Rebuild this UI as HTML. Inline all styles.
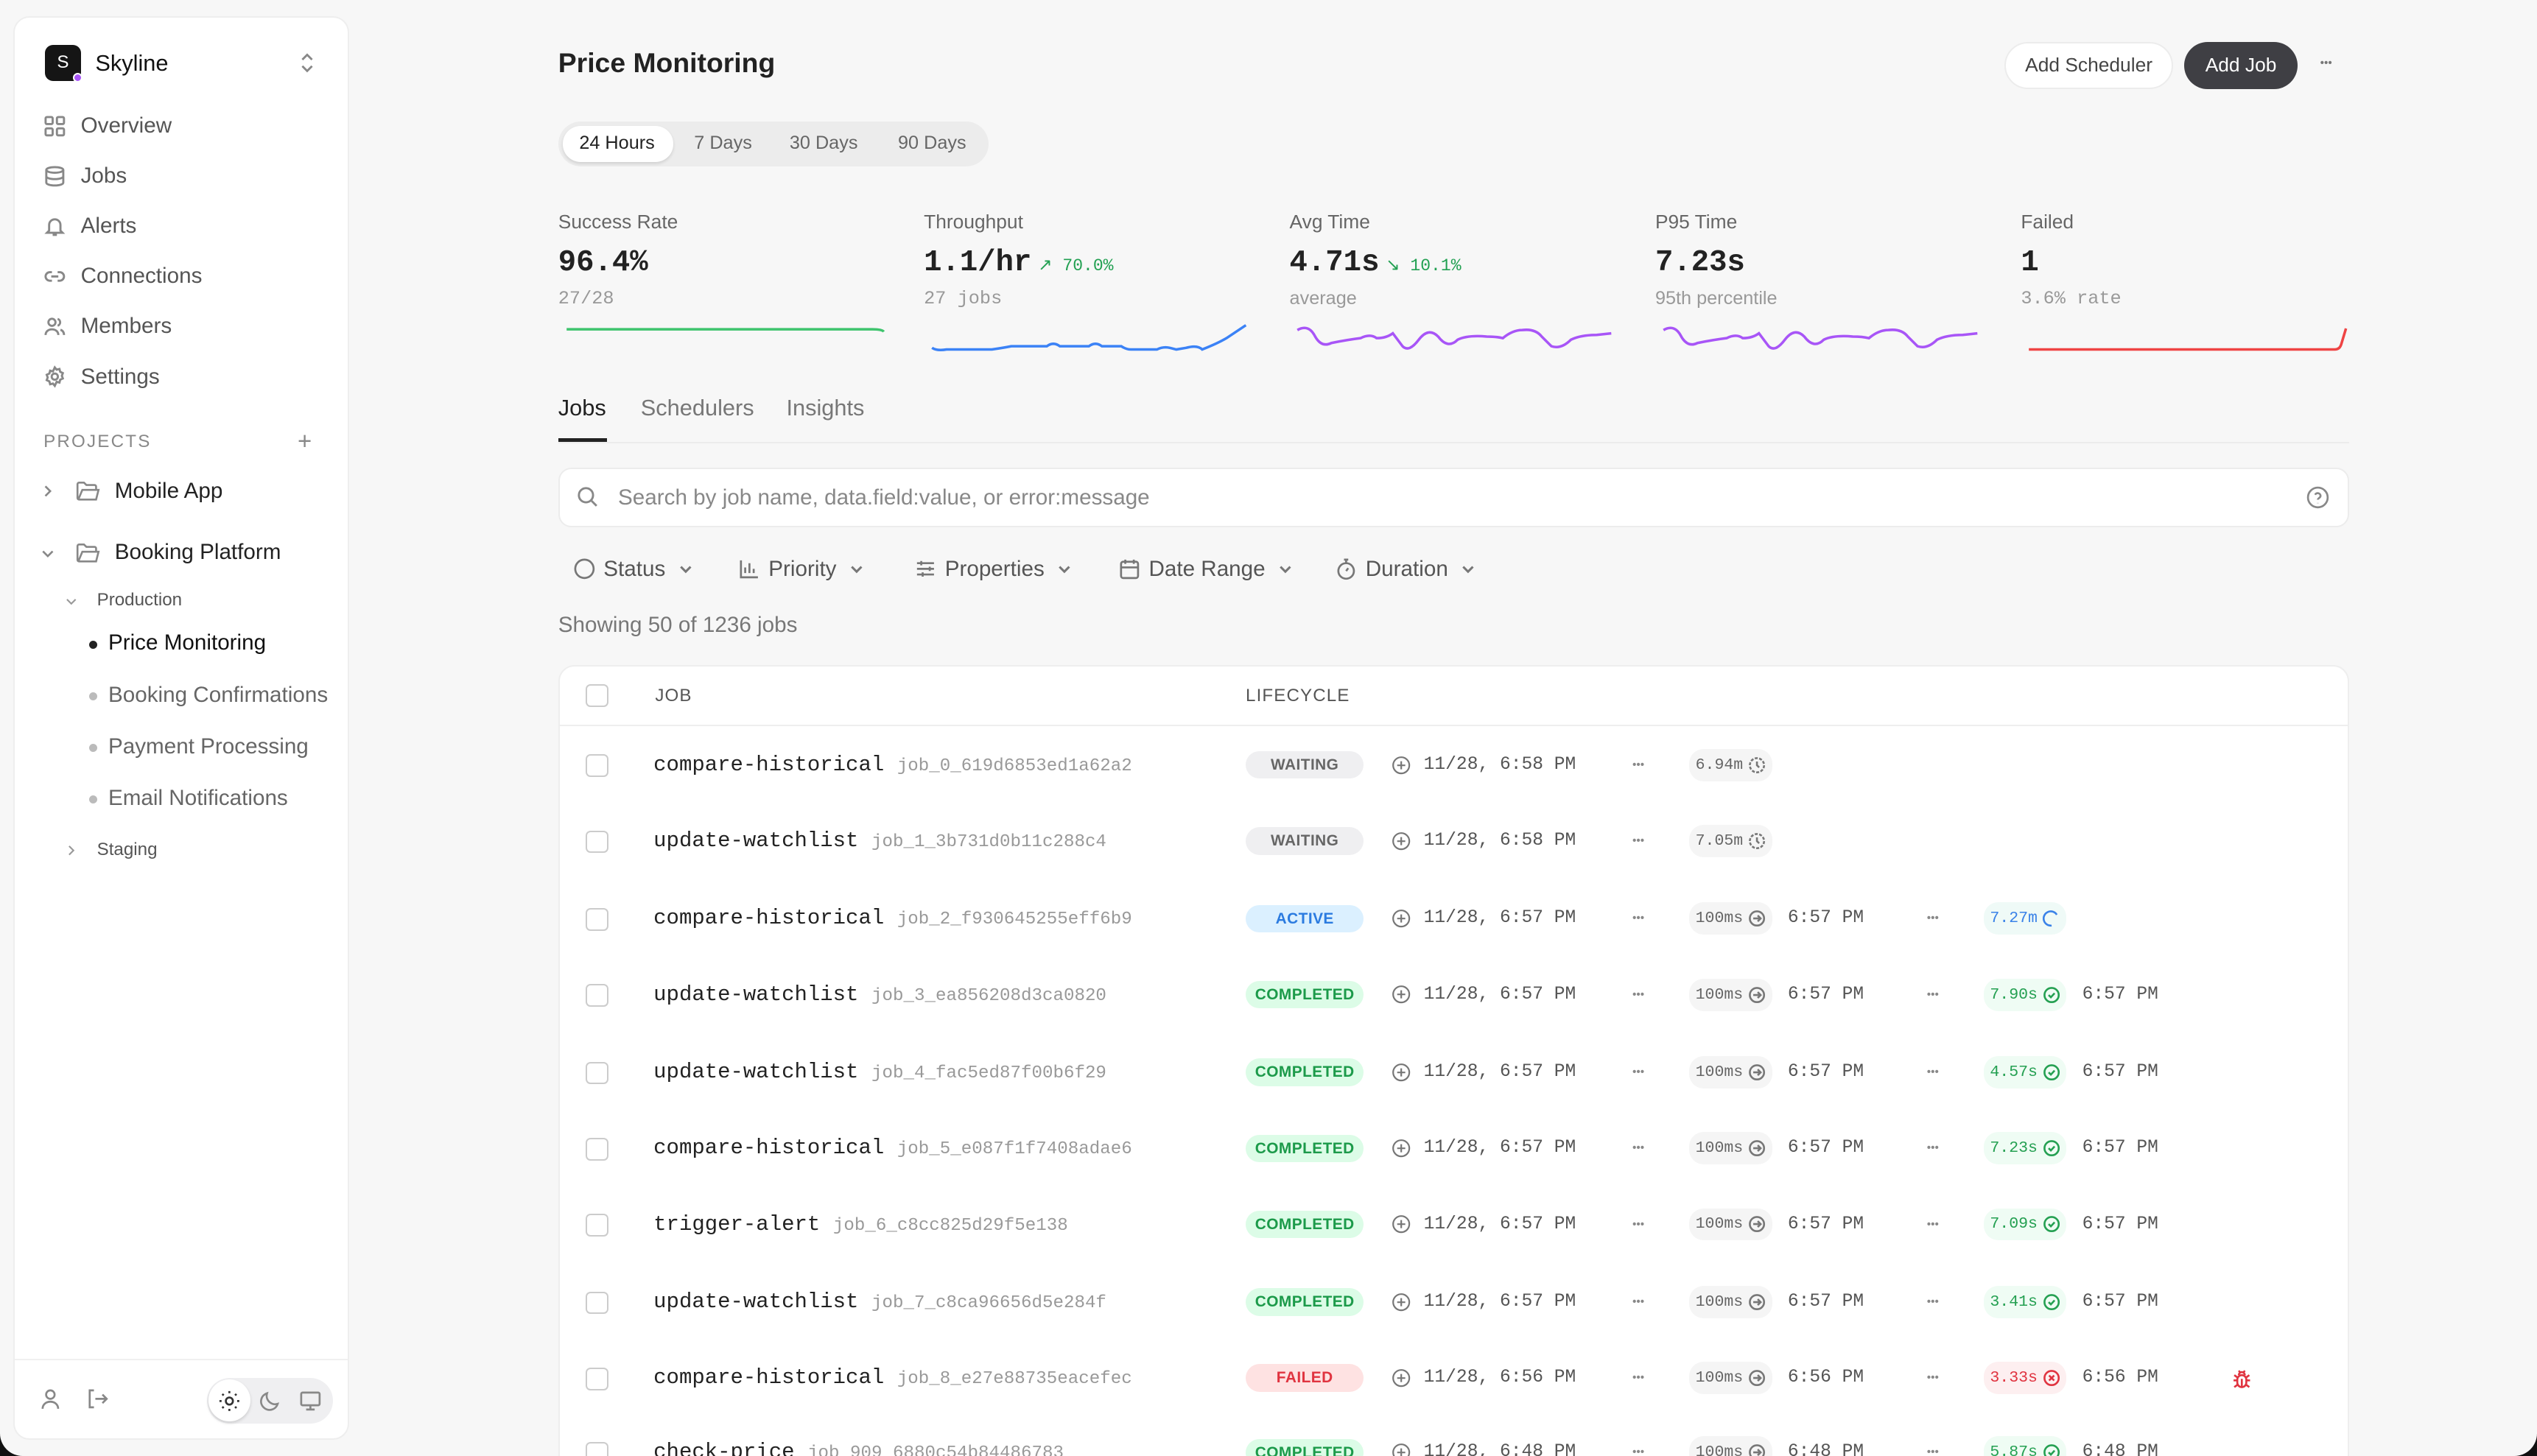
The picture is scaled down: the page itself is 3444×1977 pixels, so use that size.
<!DOCTYPE html>
<html><head><meta charset="utf-8"><style>
html{zoom:2.19643}
*{box-sizing:border-box;margin:0;padding:0}
body{width:1568px;height:900px;overflow:hidden;background:#111;font-family:"Liberation Sans",sans-serif;position:relative}
#w{position:absolute;left:0;top:0;width:1568px;height:900px;background:#f7f7f7;border-radius:0 0 14px 14px;overflow:hidden}
.a{position:absolute;white-space:nowrap}
#sb{position:absolute;left:8px;top:10px;width:208px;height:880px;background:#fff;border:1px solid #eee;border-radius:10px}
.nav{position:absolute;left:18px;font-size:13.5px;color:#555;display:flex;align-items:center;gap:9px;height:20px}
.nav svg{width:14px;height:14px;stroke:#888;fill:none;stroke-width:1.5}
.st{position:absolute;top:0;width:226px}
.st .l{position:absolute;top:130px;font-size:12px;color:#666}
.st .v{position:absolute;top:152px;font:700 18.5px "Liberation Mono",monospace;color:#222}
.st .v small{font-size:10.5px;color:#22a052;font-weight:400;margin-left:4px}
.st .s{position:absolute;top:178px;font:11.5px "Liberation Mono",monospace;color:#999}
.st .s.sans{font-family:"Liberation Sans",sans-serif}
.st svg{position:absolute;top:198px;left:4px}
.flt{position:absolute;top:344px;font-size:13.5px;color:#555;display:flex;align-items:center;gap:5px}
.flt svg{width:14px;height:14px;stroke:#777;fill:none;stroke-width:1.4}
.flt .cv{width:9px;height:9px;margin-left:3px}
#tb{position:absolute;left:345px;top:411px;width:1107px;height:560px;background:#fff;border:1px solid #eee;border-radius:10px;overflow:hidden}
.r{position:absolute;left:0;right:0;height:20px}
.r>*{position:absolute;top:0;white-space:nowrap}
.cb{left:16px;top:3.5px!important;width:14px;height:14px;border:1.3px solid #ccc;border-radius:3px;background:#fff}
.nm{left:58px;font:13.2px "Liberation Mono",monospace;line-height:20px;color:#222}
.nm i{font-style:normal;font-size:11px;color:#999;margin-left:8px}
.bd{left:424px;top:1.5px!important;width:73px;height:17px;line-height:17px;border-radius:9px;font-weight:700;font-size:9.5px;text-align:center;letter-spacing:.2px}
.W{background:#efeff1;color:#666}.A{background:#dbf0ff;color:#2b7be0}.C{background:#dcfce7;color:#1c9a4a}.F{background:#fee2e2;color:#e03440}
.ck{left:514px;top:4px!important;width:12px;height:12px}
.dt{left:534px;font:11.2px "Liberation Mono",monospace;line-height:20px;color:#555}
.d1,.d2{font-size:7px;line-height:20px;color:#888;letter-spacing:0}
.d1{left:663px}.d2{left:845px}
.p{height:20px;border-radius:9px;font:9.8px "Liberation Mono",monospace;padding:0 4px;display:flex;align-items:center;gap:3px}
.p svg{width:11px;height:11px;fill:none;stroke-width:1.3}
.p1{left:698px;background:#f5f5f5;color:#666}.p1 svg{stroke:#777}
.p2{left:880px;background:#effcf4;color:#25a052}.p2 svg{stroke:#25a052}
.p2.b{background:#effaf7;color:#3a82e8}.p2.b svg{stroke:#3a82e8}
.p2.rd{background:#fdeff0;color:#e03440}.p2.rd svg{stroke:#e03440}
.t1{left:759px;font:11.2px "Liberation Mono",monospace;line-height:20px;color:#555}
.t2{left:941px;font:11.2px "Liberation Mono",monospace;line-height:20px;color:#555}
</style></head><body><div id="w">

<div id="sb">
 <div class="a" style="left:19px;top:17px;width:22px;height:22px;background:#151515;border-radius:5px;color:#fff;font-size:11px;text-align:center;line-height:22px">S</div>
 <div class="a" style="left:36px;top:34px;width:6px;height:6px;background:#a855f7;border-radius:50%;border:1px solid #fff"></div>
 <div class="a" style="left:50px;top:20px;font-size:14px;color:#111">Skyline</div>
 <svg class="a" style="left:176px;top:21px" width="10" height="14" viewBox="0 0 10 14" fill="none" stroke="#888" stroke-width="1.3"><path d="M2 5l3-3 3 3M2 9l3 3 3-3"/></svg>

 <div class="nav" style="top:57px"><svg viewBox="0 0 16 16"><rect x="1.5" y="1.5" width="5" height="5" rx="1"/><rect x="9.5" y="1.5" width="5" height="5" rx="1"/><rect x="1.5" y="9.5" width="5" height="5" rx="1"/><rect x="9.5" y="9.5" width="5" height="5" rx="1"/></svg>Overview</div>
 <div class="nav" style="top:88px"><svg viewBox="0 0 16 16"><ellipse cx="8" cy="3.5" rx="6" ry="2"/><path d="M2 3.5v9c0 1.1 2.7 2 6 2s6-.9 6-2v-9M2 8c0 1.1 2.7 2 6 2s6-.9 6-2"/></svg>Jobs</div>
 <div class="nav" style="top:119px"><svg viewBox="0 0 16 16"><path d="M4 11V7a4 4 0 018 0v4l1.5 1.5h-11zM6.5 14h3"/></svg>Alerts</div>
 <div class="nav" style="top:150px"><svg viewBox="0 0 16 16"><path d="M6 5H4.5a3 3 0 000 6H6M10 5h1.5a3 3 0 010 6H10M5.5 8h5"/></svg>Connections</div>
 <div class="nav" style="top:181px"><svg viewBox="0 0 16 16"><circle cx="6" cy="5" r="2.5"/><path d="M1.5 14c0-2.5 2-4 4.5-4s4.5 1.5 4.5 4M10 2.6a2.5 2.5 0 010 4.8M12 10.3c1.5.5 2.5 1.8 2.5 3.7"/></svg>Members</div>
 <div class="nav" style="top:212px"><svg viewBox="0 0 16 16"><circle cx="8" cy="8" r="2.2"/><path d="M8 1.5l1.3 1.6 2-.5.5 2 1.9.9-.7 1.9.7 1.9-1.9.9-.5 2-2-.5L8 14.5l-1.3-1.6-2 .5-.5-2-1.9-.9.7-1.9-.7-1.9 1.9-.9.5-2 2 .5z"/></svg>Settings</div>

 <div class="a" style="left:18px;top:256px;font-size:11px;letter-spacing:1px;color:#888">PROJECTS</div>
 <div class="a" style="left:175px;top:253px;font-size:15px;color:#888">+</div>

 <svg class="a" style="left:16px;top:288px" width="9" height="9" viewBox="0 0 9 9" fill="none" stroke="#888" stroke-width="1.2"><path d="M3 1.5l3 3-3 3"/></svg>
 <svg class="a" style="left:38px;top:286px" width="15" height="13" viewBox="0 0 15 13" fill="none" stroke="#888" stroke-width="1.2"><path d="M1 2.5V11a1 1 0 001 1h10.5l1.5-6H4l-2.5 6M1 2.5a1 1 0 011-1h3l1.5 1.5h5a1 1 0 011 1V6"/></svg>
 <div class="a" style="left:62px;top:285px;font-size:13.5px;color:#222">Mobile App</div>

 <svg class="a" style="left:16px;top:327px" width="9" height="9" viewBox="0 0 9 9" fill="none" stroke="#888" stroke-width="1.2"><path d="M1.5 3l3 3 3-3"/></svg>
 <svg class="a" style="left:38px;top:324px" width="15" height="13" viewBox="0 0 15 13" fill="none" stroke="#888" stroke-width="1.2"><path d="M1 2.5V11a1 1 0 001 1h10.5l1.5-6H4l-2.5 6M1 2.5a1 1 0 011-1h3l1.5 1.5h5a1 1 0 011 1V6"/></svg>
 <div class="a" style="left:62px;top:323px;font-size:13.5px;color:#222">Booking Platform</div>

 <svg class="a" style="left:31px;top:357px" width="8" height="8" viewBox="0 0 9 9" fill="none" stroke="#999" stroke-width="1.1"><path d="M1.5 3l3 3 3-3"/></svg>
 <div class="a" style="left:51px;top:354px;font-size:11px;color:#555">Production</div>
 <div class="a" style="left:46px;top:385px;width:5px;height:5px;border-radius:50%;background:#222"></div>
 <div class="a" style="left:58px;top:379px;font-size:13.5px;color:#111">Price Monitoring</div>
 <div class="a" style="left:46px;top:417px;width:5px;height:5px;border-radius:50%;background:#bbb"></div>
 <div class="a" style="left:58px;top:411px;font-size:13.5px;color:#666">Booking Confirmations</div>
 <div class="a" style="left:46px;top:449px;width:5px;height:5px;border-radius:50%;background:#bbb"></div>
 <div class="a" style="left:58px;top:443px;font-size:13.5px;color:#666">Payment Processing</div>
 <div class="a" style="left:46px;top:481px;width:5px;height:5px;border-radius:50%;background:#bbb"></div>
 <div class="a" style="left:58px;top:475px;font-size:13.5px;color:#666">Email Notifications</div>
 <svg class="a" style="left:31px;top:511px" width="8" height="8" viewBox="0 0 9 9" fill="none" stroke="#999" stroke-width="1.1"><path d="M3 1.5l3 3-3 3"/></svg>
 <div class="a" style="left:51px;top:508px;font-size:11px;color:#555">Staging</div>

 <div class="a" style="left:0;right:0;top:829px;height:1px;background:#f0f0f0"></div>
 <svg class="a" style="left:15px;top:847px" width="14" height="14" viewBox="0 0 16 16" fill="none" stroke="#888" stroke-width="1.4"><circle cx="8" cy="5" r="3"/><path d="M2.5 15c0-3 2.5-5 5.5-5s5.5 2 5.5 5"/></svg>
 <svg class="a" style="left:44px;top:847px" width="14" height="14" viewBox="0 0 16 16" fill="none" stroke="#888" stroke-width="1.4"><path d="M6 2H3v12h3M7 8h8M12 5l3 3-3 3"/></svg>
 <div class="a" style="left:119px;top:841px;width:78px;height:28px;border-radius:14px;background:#efeff1"></div>
 <div class="a" style="left:120px;top:842px;width:26px;height:26px;border-radius:13px;background:#fff;box-shadow:0 1px 2px rgba(0,0,0,.15)"></div>
 <svg class="a" style="left:126px;top:848px" width="14" height="14" viewBox="0 0 16 16" fill="none" stroke="#333" stroke-width="1.4"><circle cx="8" cy="8" r="2.5"/><path d="M8 1v1.5M8 13.5V15M1 8h1.5M13.5 8H15M3 3l1 1M12 12l1 1M3 13l1-1M12 4l1-1"/></svg>
 <svg class="a" style="left:151px;top:848px" width="14" height="14" viewBox="0 0 16 16" fill="none" stroke="#888" stroke-width="1.4"><path d="M13.5 10A6 6 0 016 2.5a6 6 0 107.5 7.5z"/></svg>
 <svg class="a" style="left:176px;top:848px" width="14" height="14" viewBox="0 0 16 16" fill="none" stroke="#888" stroke-width="1.4"><rect x="1.5" y="2" width="13" height="9" rx="1"/><path d="M8 11v3M5 14h6"/></svg>
</div>

<!-- header -->
<div class="a" style="left:345px;top:29px;font-size:17px;font-weight:600;color:#222">Price Monitoring</div>
<div class="a" style="left:1239px;top:26px;width:104px;height:29px;border:1px solid #ececec;background:#fff;border-radius:15px;font-size:12px;color:#444;text-align:center;line-height:27px">Add Scheduler</div>
<div class="a" style="left:1350px;top:26px;width:70px;height:29px;background:#3f3f44;border-radius:15px;font-size:12px;color:#fff;text-align:center;line-height:29px">Add Job</div>
<div class="a" style="left:1434px;top:35px;font-size:7px;color:#777">•••</div>

<div class="a" style="left:345px;top:75px;width:266px;height:28px;background:#ececec;border-radius:14px"></div>
<div class="a" style="left:348px;top:78px;width:68px;height:22px;background:#fff;border-radius:11px;box-shadow:0 1px 2px rgba(0,0,0,.12)"></div>
<div class="a" style="left:358px;top:82px;font-size:11.5px;color:#222">24 Hours</div>
<div class="a" style="left:429px;top:82px;font-size:11.5px;color:#666">7 Days</div>
<div class="a" style="left:488px;top:82px;font-size:11.5px;color:#666">30 Days</div>
<div class="a" style="left:555px;top:82px;font-size:11.5px;color:#666">90 Days</div>

<!-- stats -->
<div class="st" style="left:345px"><div class="l">Success Rate</div><div class="v">96.4%</div><div class="s">27/28</div>
<svg width="200" height="22"><path d="M1 5.5 H190 Q196 5.5 197 7" stroke="#3ec46d" stroke-width="1.6" fill="none"/></svg></div>
<div class="st" style="left:571px"><div class="l">Throughput</div><div class="v">1.1/hr<small>↗ 70.0%</small></div><div class="s">27 jobs</div>
<svg width="200" height="22"><path d="M1 17 Q4 19 10 18 H38 Q45 17 50 16 H72 Q76 13 80 16 H98 Q102 13 106 16 H118 Q121 18 124 18 H140 Q144 16 148 17 L152 18 L158 17 Q165 15 168 18 Q178 14 183 11 L195 3" stroke="#3b82f6" stroke-width="1.6" fill="none"/></svg></div>
<div class="st" style="left:797px"><div class="l">Avg Time</div><div class="v">4.71s<small>↘ 10.1%</small></div><div class="s sans">average</div>
<svg width="200" height="22"><path d="M1 6 Q8 2 12 10 Q16 17 22 14 Q32 12 40 11 Q46 8 50 11 Q56 11 60 8 L66 16 Q70 20 76 12 Q82 4 88 10 Q94 18 100 12 Q106 9 118 10 Q124 10 128 11 Q134 6 140 6 Q148 5 152 10 L158 16 Q164 18 170 12 Q176 9 186 9 L195 8" stroke="#a855f7" stroke-width="1.6" fill="none"/></svg></div>
<div class="st" style="left:1023px"><div class="l">P95 Time</div><div class="v">7.23s</div><div class="s sans">95th percentile</div>
<svg width="200" height="22"><path d="M1 6 Q8 2 12 10 Q16 17 22 14 Q32 12 40 11 Q46 8 50 11 Q56 11 60 8 L66 16 Q70 20 76 12 Q82 4 88 10 Q94 18 100 12 Q106 9 118 10 Q124 10 128 11 Q134 6 140 6 Q148 5 152 10 L158 16 Q164 18 170 12 Q176 9 186 9 L195 8" stroke="#a855f7" stroke-width="1.6" fill="none"/></svg></div>
<div class="st" style="left:1249px"><div class="l">Failed</div><div class="v">1</div><div class="s">3.6% rate</div>
<svg width="200" height="22"><path d="M1 18 H190 Q193 18 194 15 L197 5" stroke="#ef4444" stroke-width="1.6" fill="none"/></svg></div>

<!-- tabs -->
<div class="a" style="left:345px;top:244px;font-size:14px;color:#222">Jobs</div>
<div class="a" style="left:396px;top:244px;font-size:14px;color:#777">Schedulers</div>
<div class="a" style="left:486px;top:244px;font-size:14px;color:#777">Insights</div>
<div class="a" style="left:345px;top:273px;width:1107px;height:1px;background:#ececec"></div>
<div class="a" style="left:345px;top:271px;width:30px;height:2px;background:#222"></div>

<!-- search -->
<div class="a" style="left:345px;top:289px;width:1107px;height:37px;background:#fff;border:1px solid #ececec;border-radius:8px"></div>
<svg class="a" style="left:356px;top:300px" width="14" height="14" viewBox="0 0 16 16" fill="none" stroke="#888" stroke-width="1.5"><circle cx="7" cy="7" r="5"/><path d="M11 11l3.5 3.5"/></svg>
<div class="a" style="left:382px;top:300px;font-size:13.5px;color:#888">Search by job name, data.field:value, or error:message</div>
<svg class="a" style="left:1425px;top:300px" width="15" height="15" viewBox="0 0 16 16" fill="none" stroke="#888" stroke-width="1.3"><circle cx="8" cy="8" r="6.5"/><path d="M6.2 6.2a1.9 1.9 0 013.6.7c0 1.3-1.8 1.6-1.8 2.6M8 11.6v.2"/></svg>

<!-- filters -->
<div class="flt" style="left:354px"><svg viewBox="0 0 16 16"><circle cx="8" cy="8" r="6.5"/></svg>Status<svg class="cv" viewBox="0 0 9 9"><path d="M1.5 3l3 3 3-3"/></svg></div>
<div class="flt" style="left:456px"><svg viewBox="0 0 16 16"><path d="M2 2v12h12M5 11V7M8 11V4M11 11V8"/></svg>Priority<svg class="cv" viewBox="0 0 9 9"><path d="M1.5 3l3 3 3-3"/></svg></div>
<div class="flt" style="left:565px"><svg viewBox="0 0 16 16"><path d="M2 4h12M2 8h12M2 12h12M5 2.5v3M11 6.5v3M6 10.5v3"/></svg>Properties<svg class="cv" viewBox="0 0 9 9"><path d="M1.5 3l3 3 3-3"/></svg></div>
<div class="flt" style="left:691px"><svg viewBox="0 0 16 16"><rect x="2" y="3" width="12" height="11.5" rx="1.5"/><path d="M2 7h12M5 1.5v3M11 1.5v3"/></svg>Date Range<svg class="cv" viewBox="0 0 9 9"><path d="M1.5 3l3 3 3-3"/></svg></div>
<div class="flt" style="left:825px"><svg viewBox="0 0 16 16"><circle cx="8" cy="9.5" r="5.5"/><path d="M6.5 1.5h3M8 1.5v2.5M8 9.5l1.5-2"/></svg>Duration<svg class="cv" viewBox="0 0 9 9"><path d="M1.5 3l3 3 3-3"/></svg></div>

<div class="a" style="left:345px;top:379px;font-size:13.5px;color:#777">Showing 50 of 1236 jobs</div>

<!-- table -->
<div id="tb">
 <div class="a" style="left:0;right:0;top:0;height:37px;border-bottom:1px solid #eee"></div>
 <div class="a" style="left:16px;top:11px;width:14px;height:14px;border:1.3px solid #ccc;border-radius:3px"></div>
 <div class="a" style="left:59px;top:12px;font-size:11px;color:#555;letter-spacing:.5px">JOB</div>
 <div class="a" style="left:424px;top:12px;font-size:11px;color:#555;letter-spacing:.5px">LIFECYCLE</div>

 <div class="r" style="top:51px"><div class="cb"></div><div class="nm">compare-historical<i>job_0_619d6853ed1a62a2</i></div><div class="bd W">WAITING</div>
 <svg class="ck" viewBox="0 0 12 12" fill="none" stroke="#777" stroke-width="1"><circle cx="6" cy="6" r="5"/><path d="M6 3.5v5M3.5 6h5"/></svg><div class="dt">11/28, 6:58 PM</div><div class="d1">•••</div>
 <div class="p p1">6.94m<svg viewBox="0 0 12 12"><circle cx="6" cy="6" r="4.8" stroke-dasharray="2 1"/><path d="M6 3.5V6l1.5 1.5"/></svg></div></div>
 <div class="r" style="top:98px"><div class="cb"></div><div class="nm">update-watchlist<i>job_1_3b731d0b11c288c4</i></div><div class="bd W">WAITING</div>
 <svg class="ck" viewBox="0 0 12 12" fill="none" stroke="#777" stroke-width="1"><circle cx="6" cy="6" r="5"/><path d="M6 3.5v5M3.5 6h5"/></svg><div class="dt">11/28, 6:58 PM</div><div class="d1">•••</div>
 <div class="p p1">7.05m<svg viewBox="0 0 12 12"><circle cx="6" cy="6" r="4.8" stroke-dasharray="2 1"/><path d="M6 3.5V6l1.5 1.5"/></svg></div></div>
 <div class="r" style="top:146px"><div class="cb"></div><div class="nm">compare-historical<i>job_2_f930645255eff6b9</i></div><div class="bd A">ACTIVE</div>
 <svg class="ck" viewBox="0 0 12 12" fill="none" stroke="#777" stroke-width="1"><circle cx="6" cy="6" r="5"/><path d="M6 3.5v5M3.5 6h5"/></svg><div class="dt">11/28, 6:57 PM</div><div class="d1">•••</div>
 <div class="p p1">100ms<svg viewBox="0 0 12 12"><circle cx="6" cy="6" r="4.8"/><path d="M3.5 6h5M6.5 4l2 2-2 2"/></svg></div><div class="t1">6:57 PM</div><div class="d2">•••</div>
 <div class="p p2 b">7.27m<svg viewBox="0 0 12 12"><path d="M9.5 3.5A4.8 4.8 0 106 10.8"/></svg></div></div>

 <div class="r" style="top:193px"><div class="cb"></div><div class="nm">update-watchlist<i>job_3_ea856208d3ca0820</i></div><div class="bd C">COMPLETED</div>
 <svg class="ck" viewBox="0 0 12 12" fill="none" stroke="#777" stroke-width="1"><circle cx="6" cy="6" r="5"/><path d="M6 3.5v5M3.5 6h5"/></svg><div class="dt">11/28, 6:57 PM</div><div class="d1">•••</div>
 <div class="p p1">100ms<svg viewBox="0 0 12 12"><circle cx="6" cy="6" r="4.8"/><path d="M3.5 6h5M6.5 4l2 2-2 2"/></svg></div><div class="t1">6:57 PM</div><div class="d2">•••</div>
 <div class="p p2">7.90s<svg viewBox="0 0 12 12"><circle cx="6" cy="6" r="4.8"/><path d="M4 6l1.5 1.5L8 4.8"/></svg></div><div class="t2">6:57 PM</div></div>

 <div class="r" style="top:241px"><div class="cb"></div><div class="nm">update-watchlist<i>job_4_fac5ed87f00b6f29</i></div><div class="bd C">COMPLETED</div>
 <svg class="ck" viewBox="0 0 12 12" fill="none" stroke="#777" stroke-width="1"><circle cx="6" cy="6" r="5"/><path d="M6 3.5v5M3.5 6h5"/></svg><div class="dt">11/28, 6:57 PM</div><div class="d1">•••</div>
 <div class="p p1">100ms<svg viewBox="0 0 12 12"><circle cx="6" cy="6" r="4.8"/><path d="M3.5 6h5M6.5 4l2 2-2 2"/></svg></div><div class="t1">6:57 PM</div><div class="d2">•••</div>
 <div class="p p2">4.57s<svg viewBox="0 0 12 12"><circle cx="6" cy="6" r="4.8"/><path d="M4 6l1.5 1.5L8 4.8"/></svg></div><div class="t2">6:57 PM</div></div>

 <div class="r" style="top:288px"><div class="cb"></div><div class="nm">compare-historical<i>job_5_e087f1f7408adae6</i></div><div class="bd C">COMPLETED</div>
 <svg class="ck" viewBox="0 0 12 12" fill="none" stroke="#777" stroke-width="1"><circle cx="6" cy="6" r="5"/><path d="M6 3.5v5M3.5 6h5"/></svg><div class="dt">11/28, 6:57 PM</div><div class="d1">•••</div>
 <div class="p p1">100ms<svg viewBox="0 0 12 12"><circle cx="6" cy="6" r="4.8"/><path d="M3.5 6h5M6.5 4l2 2-2 2"/></svg></div><div class="t1">6:57 PM</div><div class="d2">•••</div>
 <div class="p p2">7.23s<svg viewBox="0 0 12 12"><circle cx="6" cy="6" r="4.8"/><path d="M4 6l1.5 1.5L8 4.8"/></svg></div><div class="t2">6:57 PM</div></div>

 <div class="r" style="top:335px"><div class="cb"></div><div class="nm">trigger-alert<i>job_6_c8cc825d29f5e138</i></div><div class="bd C">COMPLETED</div>
 <svg class="ck" viewBox="0 0 12 12" fill="none" stroke="#777" stroke-width="1"><circle cx="6" cy="6" r="5"/><path d="M6 3.5v5M3.5 6h5"/></svg><div class="dt">11/28, 6:57 PM</div><div class="d1">•••</div>
 <div class="p p1">100ms<svg viewBox="0 0 12 12"><circle cx="6" cy="6" r="4.8"/><path d="M3.5 6h5M6.5 4l2 2-2 2"/></svg></div><div class="t1">6:57 PM</div><div class="d2">•••</div>
 <div class="p p2">7.09s<svg viewBox="0 0 12 12"><circle cx="6" cy="6" r="4.8"/><path d="M4 6l1.5 1.5L8 4.8"/></svg></div><div class="t2">6:57 PM</div></div>

 <div class="r" style="top:383px"><div class="cb"></div><div class="nm">update-watchlist<i>job_7_c8ca96656d5e284f</i></div><div class="bd C">COMPLETED</div>
 <svg class="ck" viewBox="0 0 12 12" fill="none" stroke="#777" stroke-width="1"><circle cx="6" cy="6" r="5"/><path d="M6 3.5v5M3.5 6h5"/></svg><div class="dt">11/28, 6:57 PM</div><div class="d1">•••</div>
 <div class="p p1">100ms<svg viewBox="0 0 12 12"><circle cx="6" cy="6" r="4.8"/><path d="M3.5 6h5M6.5 4l2 2-2 2"/></svg></div><div class="t1">6:57 PM</div><div class="d2">•••</div>
 <div class="p p2">3.41s<svg viewBox="0 0 12 12"><circle cx="6" cy="6" r="4.8"/><path d="M4 6l1.5 1.5L8 4.8"/></svg></div><div class="t2">6:57 PM</div></div>

 <div class="r" style="top:430px"><div class="cb"></div><div class="nm">compare-historical<i>job_8_e27e88735eacefec</i></div><div class="bd F">FAILED</div>
 <svg class="ck" viewBox="0 0 12 12" fill="none" stroke="#777" stroke-width="1"><circle cx="6" cy="6" r="5"/><path d="M6 3.5v5M3.5 6h5"/></svg><div class="dt">11/28, 6:56 PM</div><div class="d1">•••</div>
 <div class="p p1">100ms<svg viewBox="0 0 12 12"><circle cx="6" cy="6" r="4.8"/><path d="M3.5 6h5M6.5 4l2 2-2 2"/></svg></div><div class="t1">6:56 PM</div><div class="d2">•••</div>
 <div class="p p2 rd">3.33s<svg viewBox="0 0 12 12"><circle cx="6" cy="6" r="4.8"/><path d="M4.3 4.3l3.4 3.4M7.7 4.3L4.3 7.7"/></svg></div><div class="t2">6:56 PM</div>
 <svg style="left:1033px;top:4px;width:13px;height:13px" viewBox="0 0 14 14" fill="none" stroke="#e03440" stroke-width="1.3"><rect x="4" y="4.5" width="6" height="8" rx="3"/><path d="M5 4.5a2 2 0 014 0M7 7v5M1.5 8H4M10 8h2.5M2 4.5l2 1.5M12 4.5L10 6M2 12.5l2-1.5M12 12.5L10 11M5 1.5l1 1.5M9 1.5L8 3"/></svg></div>

 <div class="r" style="top:476px"><div class="cb"></div><div class="nm">check-price<i>job_909_6880c54b84486783</i></div><div class="bd C">COMPLETED</div>
 <svg class="ck" viewBox="0 0 12 12" fill="none" stroke="#777" stroke-width="1"><circle cx="6" cy="6" r="5"/><path d="M6 3.5v5M3.5 6h5"/></svg><div class="dt">11/28, 6:48 PM</div><div class="d1">•••</div>
 <div class="p p1">100ms<svg viewBox="0 0 12 12"><circle cx="6" cy="6" r="4.8"/><path d="M3.5 6h5M6.5 4l2 2-2 2"/></svg></div><div class="t1">6:48 PM</div><div class="d2">•••</div>
 <div class="p p2">5.87s<svg viewBox="0 0 12 12"><circle cx="6" cy="6" r="4.8"/><path d="M4 6l1.5 1.5L8 4.8"/></svg></div><div class="t2">6:48 PM</div></div>
</div>

</div></body></html>
